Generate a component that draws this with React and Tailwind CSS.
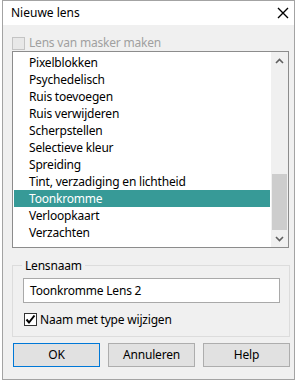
import React from 'react';

const items = [
  'Pixelblokken',
  'Psychedelisch',
  'Ruis toevoegen',
  'Ruis verwijderen',
  'Scherpstellen',
  'Selectieve kleur',
  'Spreiding',
  'Tint, verzadiging en lichtheid',
  'Toonkromme',
  'Verloopkaart',
  'Verzachten',
];

const Chevron = ({ up }) => (
  <svg width="9" height="6" viewBox="0 0 9 6">
    <path
      d={up ? 'M1 5 L4.5 1.5 L8 5' : 'M1 1 L4.5 4.5 L8 1'}
      fill="none"
      stroke="#606060"
      strokeWidth="1.6"
    />
  </svg>
);

const App = () => {
  const selected = 'Toonkromme';

  return (
    <div
      className="w-[300px] h-[381px] bg-white text-[12px] text-black tracking-[-0.2px]"
      style={{ fontFamily: '"Segoe UI", "Noto Sans", sans-serif' }}
    >
      <div className="ml-[2px] w-[293px] h-[380px] border border-[#a3a3a3] flex flex-col">
        {/* Title bar */}
        <div className="h-[24px] bg-white flex items-center justify-between pl-[8px] pr-[5px]">
          <span className="leading-[24px] tracking-normal">Nieuwe lens</span>
          <svg width="12" height="12" viewBox="0 0 12 12">
            <path d="M1 1 L11 11 M11 1 L1 11" stroke="#000" strokeWidth="1.4" />
          </svg>
        </div>

        {/* Body */}
        <div className="flex-1 bg-[#f0f0f0] pl-[9px] pr-[5px] flex flex-col">
          {/* Disabled checkbox */}
          <div className="mt-[10px] h-[16px] flex items-center">
            <div className="w-[13px] h-[13px] border border-[#c4c4c4] bg-[#e8e8e8]" />
            <span className="ml-[4px] text-[#a0a0a0] leading-[16px]">Lens van masker maken</span>
          </div>

          {/* List box */}
          <div className="w-[277px] h-[197px] border border-[#8c8c8c] bg-white flex">
            <div className="flex-1 pt-[2px] pl-[1px] pr-[1px]">
              {items.map((item) => (
                <div
                  key={item}
                  className={
                    item === selected
                      ? 'h-[17px] leading-[17px] pl-[15px] bg-[#379a97] text-white'
                      : 'h-[17px] leading-[17px] pl-[15px]'
                  }
                >
                  {item}
                </div>
              ))}
            </div>
            <div className="w-[17px] bg-[#f0f0f0] flex flex-col">
              <div className="h-[17px] flex items-center justify-center">
                <Chevron up />
              </div>
              <div className="flex-1 flex flex-col justify-end px-[1px]">
                <div className="h-[56px] bg-[#cdcdcd]" />
              </div>
              <div className="h-[17px] flex items-center justify-center">
                <Chevron />
              </div>
            </div>
          </div>

          {/* Group box */}
          <fieldset className="mt-[9px] w-[278px] h-[80px] border border-[#dcdcdc] pl-[10px]">
            <legend className="ml-[-1px] px-[3px] leading-[17px]">Lensnaam</legend>
            <div className="mt-[4px] w-[257px] h-[25px] border border-[#a9a9a9] bg-white pl-[6px] flex items-center">
              Toonkromme Lens 2
            </div>
            <div className="mt-[10px] flex items-center">
              <div className="ml-[1px] w-[13px] h-[13px] border border-[#333333] bg-white flex items-center justify-center">
                <svg width="11" height="11" viewBox="0 0 11 11">
                  <path d="M1.5 5.5 L4 8.5 L9.5 1.5" fill="none" stroke="#000" strokeWidth="2" />
                </svg>
              </div>
              <span className="ml-[3px] leading-[13px]">Naam met type wijzigen</span>
            </div>
          </fieldset>

          {/* Buttons */}
          <div className="mt-[6px] w-[278px] flex justify-between">
            <button className="w-[87px] h-[24px] border border-[#0078d7] bg-[#e1e1e1] ml-[1px]">OK</button>
            <button className="w-[87px] h-[24px] border border-[#adadad] bg-[#e1e1e1]">Annuleren</button>
            <button className="w-[87px] h-[24px] border border-[#adadad] bg-[#e1e1e1]">Help</button>
          </div>
        </div>
      </div>
    </div>
  );
};

export default App;
